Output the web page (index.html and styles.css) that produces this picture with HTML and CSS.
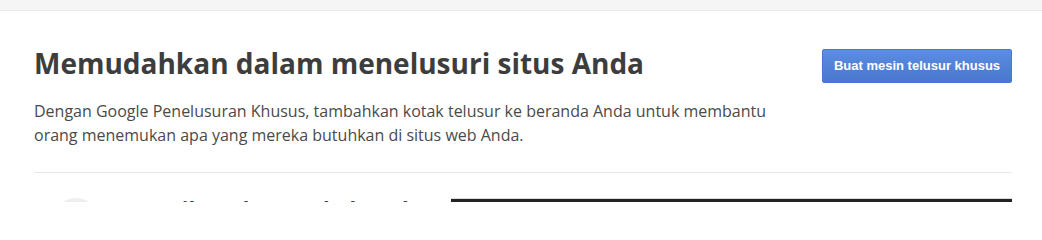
FILE: index.html
```html
<!DOCTYPE html>
<html lang="id">
<head>
<meta charset="utf-8">
<title>Google Penelusuran Khusus</title>
<link rel="stylesheet" href="styles.css">
</head>
<body>
<div class="topbar"></div>
<main class="page">
  <section class="intro">
    <div class="intro-text">
      <h1 class="title">Memudahkan dalam menelusuri situs Anda</h1>
      <p class="lead">Dengan Google Penelusuran Khusus, tambahkan kotak telusur ke beranda Anda untuk membantu orang menemukan apa yang mereka butuhkan di situs web Anda.</p>
    </div>
    <a class="btn" href="#">Buat mesin telusur khusus</a>
  </section>
  <hr class="divider">
  <section class="feature">
    <div class="feature-left">
      <div class="feature-icon"></div>
      <h2 class="feature-title">Sesuaikan dengan kebutuhan</h2>
    </div>
    <div class="video"></div>
  </section>
</main>
</body>
</html>
```

FILE: styles.css
```css
html, body {
  margin: 0;
  padding: 0;
  background: #fff;
}
body {
  height: 202px;
  overflow: hidden;
  font-family: "Open Sans", "Noto Sans", sans-serif;
  color: #404040;
}
.topbar {
  height: 10px;
  background: #f5f5f5;
  border-bottom: 1px solid #e9e9e9;
}
.page {
  padding: 0 30px 0 34px;
}
.intro {
  display: flex;
  justify-content: space-between;
  align-items: flex-start;
}
.intro-text {
  max-width: 760px;
}
.title {
  margin: 34px 0 0;
  font-size: 28px;
  line-height: 36px;
  font-weight: 700;
  color: #3d3d3d;
}
.lead {
  margin: 18px 0 0;
  font-size: 16px;
  line-height: 24px;
  color: #4a4a4a;
}
.btn {
  margin-top: 38px;
  display: block;
  box-sizing: border-box;
  width: 190px;
  height: 34px;
  line-height: 32px;
  text-align: center;
  border: 1px solid #4a79cc;
  border-radius: 2px;
  background: linear-gradient(#5c8de2, #4877cd);
  color: #fff;
  font-family: "Liberation Sans", Arial, sans-serif;
  font-weight: 700;
  font-size: 13px;
  text-decoration: none;
}
.divider {
  margin: 25px 0 0;
  border: 0;
  border-top: 1px solid #e8e8e8;
  height: 0;
}
.feature {
  display: flex;
  justify-content: space-between;
  gap: 20px;
  margin-top: 25px;
}
.feature-left {
  flex: 1;
  display: flex;
  align-items: flex-start;
  gap: 17px;
  padding-left: 17px;
  min-width: 0;
}
.feature-icon {
  width: 50px;
  height: 50px;
  border-radius: 50%;
  background: #efefef;
  flex: none;
}
.feature-title {
  margin: -5px 0 0;
  font-size: 22px;
  line-height: 30px;
  font-weight: 700;
  white-space: nowrap;
  color: #3d3d3d;
}
.video {
  flex: none;
  width: 561px;
  height: 300px;
  background: #222;
  border-top: 1px solid #dcdcdc;
}
```
